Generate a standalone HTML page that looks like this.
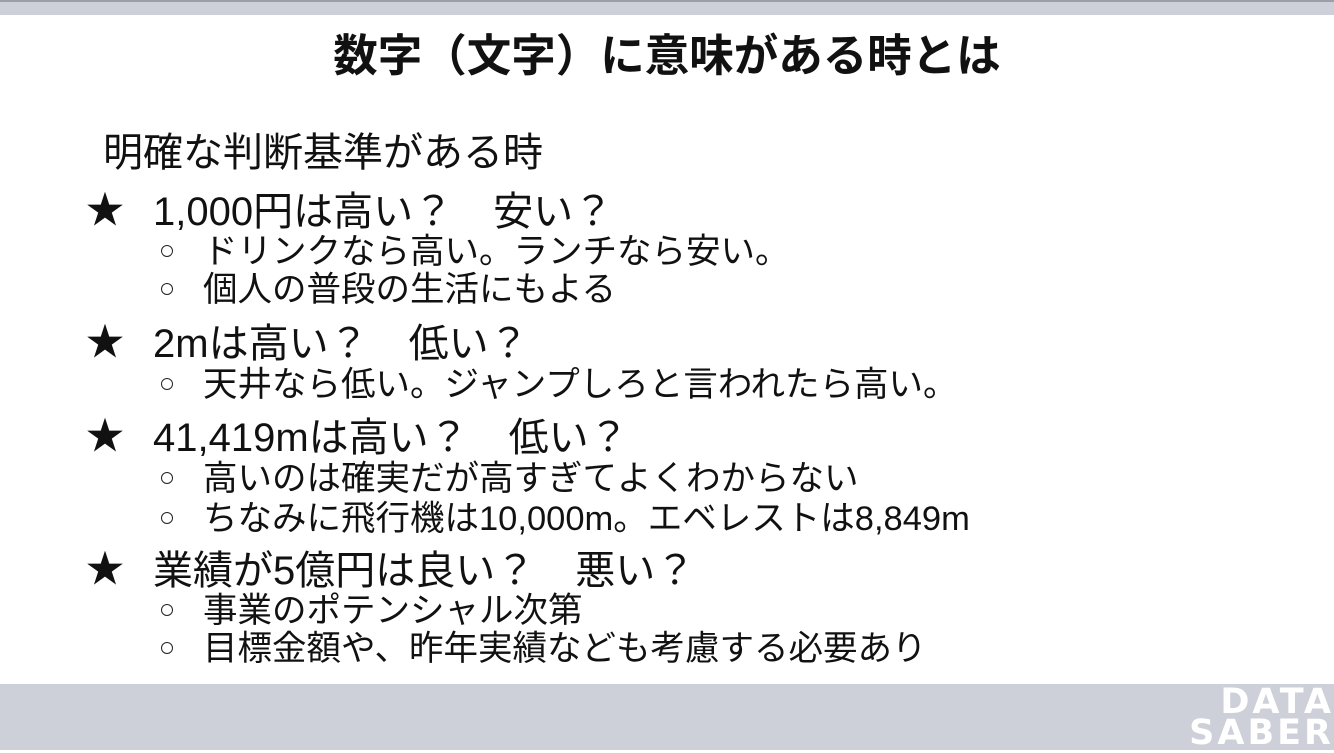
<!DOCTYPE html>
<html><head><meta charset="utf-8"><style>
html,body{margin:0;padding:0}
body{width:1334px;height:750px;position:relative;background:#fff;overflow:hidden;font-family:"Liberation Sans","Noto Sans CJK JP",sans-serif;color:#111}
.top{position:absolute;left:0;top:0;width:1334px;height:15px;background:#cdd0d9;border-top:2px solid #9a9ea8;box-sizing:border-box}
.bot{position:absolute;left:0;top:684px;width:1334px;height:66px;background:#cdd0d9}
.logo{position:absolute;right:0;top:687px;width:200px;color:#fff;font-family:"DejaVu Sans","Liberation Sans",sans-serif;font-weight:bold;font-size:35px;line-height:31px;letter-spacing:3px;text-align:right}
.l{position:absolute;white-space:nowrap;height:40px;line-height:40px}
.t{left:0;width:1334px;text-align:center;font-weight:bold;font-size:44.5px;top:37px}
.h{left:103px;font-size:40px}
.m{left:153px;font-size:40px}
.s{left:203px;font-size:34.5px}
.star{position:absolute;left:86px;font-size:38px;line-height:40px;height:40px}
.c{position:absolute;left:161px;width:10px;height:10px;border:1.5px solid #222;border-radius:50%}
</style></head><body>
<div class="top"></div>
<div class="l t">数字（文字）に意味がある時とは</div>
<div class="l h" style="top:133px">明確な判断基準がある時</div>

<div class="star" style="top:191px">★</div>
<div class="l m" style="top:192px">1,000円は高い？　安い？</div>
<div class="c" style="top:245px"></div>
<div class="l s" style="top:232px">ドリンクなら高い。ランチなら安い。</div>
<div class="c" style="top:283px"></div>
<div class="l s" style="top:270px">個人の普段の生活にもよる</div>

<div class="star" style="top:323px">★</div>
<div class="l m" style="top:324px">2mは高い？　低い？</div>
<div class="c" style="top:378px"></div>
<div class="l s" style="top:365px">天井なら低い。ジャンプしろと言われたら高い。</div>

<div class="star" style="top:417px">★</div>
<div class="l m" style="top:418px">41,419mは高い？　低い？</div>
<div class="c" style="top:472px"></div>
<div class="l s" style="top:459px">高いのは確実だが高すぎてよくわからない</div>
<div class="c" style="top:512px"></div>
<div class="l s" style="top:499px">ちなみに飛行機は10,000m。エベレストは8,849m</div>

<div class="star" style="top:550px">★</div>
<div class="l m" style="top:551px">業績が5億円は良い？　悪い？</div>
<div class="c" style="top:604px"></div>
<div class="l s" style="top:591px">事業のポテンシャル次第</div>
<div class="c" style="top:642px"></div>
<div class="l s" style="top:629px">目標金額や、昨年実績なども考慮する必要あり</div>

<div class="bot"></div>
<div class="logo">DATA<br>SABER</div>
</body></html>
